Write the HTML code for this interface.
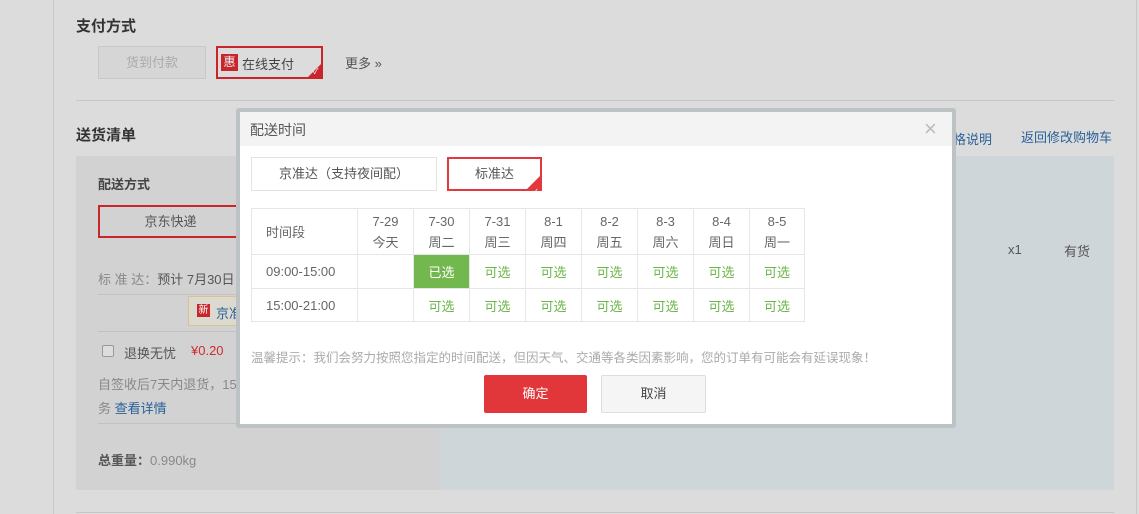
<!DOCTYPE html>
<html><head><meta charset="utf-8"><style>
*{margin:0;padding:0;box-sizing:border-box}
body{width:1139px;height:514px;overflow:hidden;background:#dcdcdc;font-family:"Liberation Sans","Noto Sans CJK SC",sans-serif;font-size:13px;color:#555;position:relative}
.a{position:absolute;white-space:nowrap}
.chk{position:absolute;right:0;bottom:0;width:0;height:0;border-style:solid;border-width:0 0 13px 13px;border-color:transparent transparent #c8262c transparent}
.chk:after{content:"✓";position:absolute;left:-8px;top:2px;color:#fff;font-size:8px}
table{border-collapse:collapse;position:absolute;left:251px;top:208px}
td{border:1px solid #e6e6e6;text-align:center;font-size:13px;color:#666}
td.g{color:#6ab548}
</style></head><body>
<div class="a" style="left:53px;top:0;width:1px;height:514px;background:#c8c8c8"></div>
<div class="a" style="left:1136px;top:0;width:1px;height:514px;background:#c8c8c8"></div>
<div class="a" style="left:76px;top:15px;font-size:15px;font-weight:bold;color:#333">支付方式</div>
<div class="a" style="left:98px;top:46px;width:108px;height:33px;border:1px solid #c8c8c8;background:#d6d6d6;color:#aaa;text-align:center;line-height:31px">货到付款</div>
<div class="a" style="left:216px;top:46px;width:107px;height:33px;border:2px solid #c8262c;background:#dcdcdc"><span class="a" style="left:3px;top:6px;width:17px;height:17px;background:#c8262c;color:#eee;font-size:12px;text-align:center;line-height:17px">惠</span><span class="a" style="left:24px;top:6px;color:#444">在线支付</span><div class="chk"></div></div>
<div class="a" style="left:345px;top:53px;color:#555">更多 »</div>
<div class="a" style="left:76px;top:100px;width:1038px;height:1px;background:#c6c6c6"></div>
<div class="a" style="left:76px;top:124px;font-size:15px;font-weight:bold;color:#333">送货清单</div>
<div class="a" style="left:953px;top:129px;color:#2a6099">格说明</div>
<div class="a" style="left:1021px;top:127px;color:#2a6099">返回修改购物车</div>
<div class="a" style="left:76px;top:156px;width:364px;height:334px;background:#d2d2d2"></div>
<div class="a" style="left:440px;top:156px;width:674px;height:334px;background:#cfd6d9"></div>
<div class="a" style="left:1008px;top:242px;color:#555">x1</div>
<div class="a" style="left:1064px;top:241px;color:#555">有货</div>
<div class="a" style="left:98px;top:174px;font-weight:bold;color:#444">配送方式</div>
<div class="a" style="left:98px;top:205px;width:145px;height:33px;border:2px solid #c8262c;text-align:center;line-height:29px;color:#555">京东快递</div>
<div class="a" style="left:98px;top:269px;color:#888">标 准 达：<span style="color:#555">预计 7月30日</span></div>
<div class="a" style="left:98px;top:294px;width:140px;height:1px;background:#c2c2c2"></div>
<div class="a" style="left:188px;top:296px;width:52px;height:30px;border:1px solid #d8c48a;background:#dcdad0;overflow:hidden"><span class="a" style="left:8px;top:7px;width:13px;height:13px;background:#c8262c;color:#fff;font-size:10px;line-height:13px;text-align:center">新</span><span class="a" style="left:27px;top:6px;color:#2a6099">京准</span></div>
<div class="a" style="left:98px;top:331px;width:140px;height:1px;background:#c2c2c2"></div>
<div class="a" style="left:102px;top:345px;width:12px;height:12px;border:1px solid #999;border-radius:2px;background:#ddd"></div>
<div class="a" style="left:124px;top:343px;color:#555">退换无忧</div>
<div class="a" style="left:191px;top:343px;color:#d02c2c">¥0.20</div>
<div class="a" style="left:98px;top:374px;color:#888">自签收后7天内退货，15</div>
<div class="a" style="left:98px;top:398px;color:#888">务 <span style="color:#2a6099">查看详情</span></div>
<div class="a" style="left:98px;top:423px;width:140px;height:1px;background:#c2c2c2"></div>
<div class="a" style="left:98px;top:450px;color:#888"><b style="color:#555">总重量：</b>0.990kg</div>
<div class="a" style="left:76px;top:512px;width:1038px;height:1px;background:#c6c6c6"></div>

<div class="a" style="left:236px;top:108px;width:720px;height:320px;background:#bdc2c4;border-radius:3px"></div>
<div class="a" style="left:240px;top:112px;width:712px;height:312px;background:#fff">
  <div class="a" style="left:0;top:0;width:712px;height:34px;background:#f3f3f3"><span class="a" style="left:10px;top:8px;font-size:14px;color:#555">配送时间</span><span class="a" style="left:684px;top:4px;font-size:22px;color:#bbb;font-weight:lighter">×</span></div>
</div>
<div class="a" style="left:251px;top:157px;width:186px;height:34px;border:1px solid #e3e3e3;text-align:center;line-height:32px;color:#555">京准达（支持夜间配）</div>
<div class="a" style="left:447px;top:157px;width:95px;height:34px;border:2px solid #e4393c;text-align:center;line-height:30px;color:#555">标准达<div class="chk" style="border-color:transparent transparent #e4393c transparent"></div></div>
<table>
<tr style="height:46px"><td style="width:106px;text-align:left;padding-left:14px">时间段</td><td style="width:56px;line-height:21px">7-29<br>今天</td><td style="width:56px;line-height:21px">7-30<br>周二</td><td style="width:56px;line-height:21px">7-31<br>周三</td><td style="width:56px;line-height:21px">8-1<br>周四</td><td style="width:56px;line-height:21px">8-2<br>周五</td><td style="width:56px;line-height:21px">8-3<br>周六</td><td style="width:56px;line-height:21px">8-4<br>周日</td><td style="width:55px;line-height:21px">8-5<br>周一</td></tr>
<tr style="height:34px"><td style="text-align:left;padding-left:14px">09:00-15:00</td><td></td><td style="background:#72b84f;color:#fff">已选</td><td class="g">可选</td><td class="g">可选</td><td class="g">可选</td><td class="g">可选</td><td class="g">可选</td><td class="g">可选</td></tr>
<tr style="height:33px"><td style="text-align:left;padding-left:14px">15:00-21:00</td><td></td><td class="g">可选</td><td class="g">可选</td><td class="g">可选</td><td class="g">可选</td><td class="g">可选</td><td class="g">可选</td><td class="g">可选</td></tr>
</table>
<div class="a" style="left:251px;top:347px;color:#aaa;font-size:12.5px">温馨提示：我们会努力按照您指定的时间配送，但因天气、交通等各类因素影响，您的订单有可能会有延误现象！</div>
<div class="a" style="left:484px;top:375px;width:103px;height:38px;background:#e2373a;border-radius:2px;color:#fff;text-align:center;line-height:38px">确定</div>
<div class="a" style="left:601px;top:375px;width:105px;height:38px;background:#f5f5f5;border:1px solid #ddd;border-radius:2px;color:#444;text-align:center;line-height:36px">取消</div>
</body></html>
